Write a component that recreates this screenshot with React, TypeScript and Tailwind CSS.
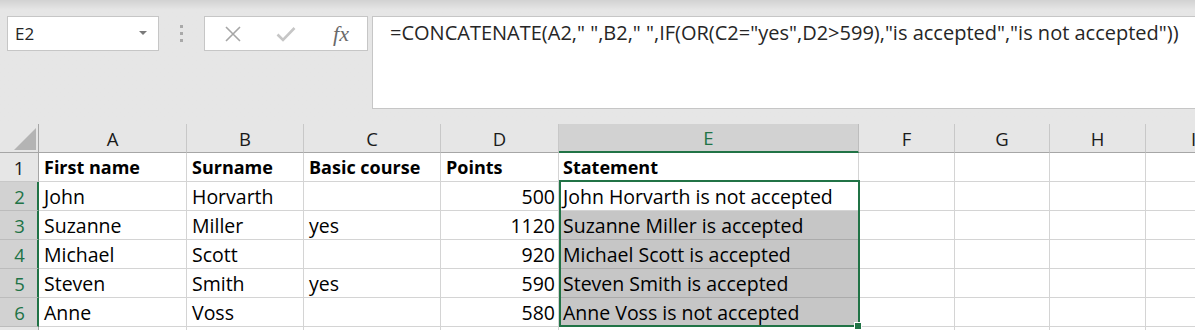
import React from 'react';

// 列定义：字母
const columns = ['A', 'B', 'C', 'D', 'E', 'F', 'G', 'H', 'I'];

type Row = {
  first: string;
  surname: string;
  course: string;
  points: string;
  statement: string;
  bold?: boolean;
};

const rows: Row[] = [
  { first: 'First name', surname: 'Surname', course: 'Basic course', points: 'Points', statement: 'Statement', bold: true },
  { first: 'John', surname: 'Horvarth', course: '', points: '500', statement: 'John Horvarth is not accepted' },
  { first: 'Suzanne', surname: 'Miller', course: 'yes', points: '1120', statement: 'Suzanne Miller is accepted' },
  { first: 'Michael', surname: 'Scott', course: '', points: '920', statement: 'Michael Scott is accepted' },
  { first: 'Steven', surname: 'Smith', course: 'yes', points: '590', statement: 'Steven Smith is accepted' },
  { first: 'Anne', surname: 'Voss', course: '', points: '580', statement: 'Anne Voss is not accepted' },
  { first: '', surname: '', course: '', points: '', statement: '' },
];

const cellFont = { fontFamily: '"Open Sans", "Liberation Sans", sans-serif' };

/**
 * 公式栏
 */
const FormulaBar: React.FC = () => (
  <div className="flex h-[124px] items-start bg-gradient-to-b from-[#d2d2d2] via-[#e6e6e6] via-[8%] to-[#e6e6e6] pt-4 pl-[7px]">
    {/* 名称框 */}
    <div className="flex h-[35px] w-[152px] items-center justify-between border border-[#c6c6c6] bg-white pl-[7px] pr-[11px]">
      <span className="text-[17px] text-[#262626]" style={{ fontFamily: '"Open Sans", sans-serif' }}>
        E2
      </span>
      <svg width="8" height="5" viewBox="0 0 8 5">
        <polygon points="0,0 8,0 4,4" fill="#7a7a7a" />
      </svg>
    </div>

    {/* 分隔点 */}
    <div className="flex h-[35px] w-[45px] flex-col items-center justify-center gap-[4px]">
      <span className="h-[3px] w-[3px] bg-[#a9a9a9]" />
      <span className="h-[3px] w-[3px] bg-[#a9a9a9]" />
      <span className="h-[3px] w-[3px] bg-[#a9a9a9]" />
    </div>

    {/* 取消 / 确认 / fx */}
    <div className="flex h-[35px] w-[164px] items-center border border-[#c6c6c6] bg-white">
      <div className="flex w-[54px] justify-center pl-[2px]">
        <svg width="18" height="18" viewBox="0 0 18 18">
          <path d="M2 2 L16 16 M16 2 L2 16" stroke="#a6a6a6" strokeWidth="1.6" fill="none" />
        </svg>
      </div>
      <div className="flex w-[54px] justify-center">
        <svg width="20" height="16" viewBox="0 0 20 16">
          <path d="M1.5 8.5 L7 14 L18.5 2" stroke="#c6c6c6" strokeWidth="2.6" fill="none" />
        </svg>
      </div>
      <div className="flex w-[54px] justify-center pl-[2px]">
        <span
          className="text-[22px] leading-[24px] italic text-[#6a6a6a]"
          style={{ fontFamily: '"Liberation Serif", serif' }}
        >
          fx
        </span>
      </div>
    </div>

    {/* 公式输入框 */}
    <div className="ml-[4px] h-[93px] flex-1 border-y border-l border-[#c6c6c6] bg-white pl-[17px] pt-[4px]">
      <span
        className="whitespace-pre text-[20px] leading-[24px] text-[#262626]"
        style={{ fontFamily: '"Open Sans", sans-serif' }}
      >
        =CONCATENATE(A2," ",B2," ",IF(OR(C2="yes",D2&gt;599),"is accepted","is not accepted"))
      </span>
    </div>
  </div>
);

/**
 * 工作表网格
 */
const Sheet: React.FC = () => (
  <div className="relative overflow-hidden">
    <div className="grid w-[1242px] grid-cols-[39px_148px_117px_137px_118px_300px_96px_95px_96px_96px]" style={cellFont}>
      {/* 列标题行 */}
      <div className="relative h-[29px] border-r border-b border-[#a6a6a6] bg-[#e6e6e6]">
        <svg className="absolute right-[2px] bottom-[2px]" width="22" height="22" viewBox="0 0 22 22">
          <polygon points="0,22 22,22 22,0" fill="#b4b4b4" />
        </svg>
      </div>
      {columns.map((c) =>
        c === 'E' ? (
          <div
            key={c}
            className="flex h-[29px] items-center justify-center border-r border-b-2 border-r-[#bdbdbd] border-b-[#217346] bg-[#d2d2d2] pt-[1px] text-[18.5px] text-[#217346]"
          >
            {c}
          </div>
        ) : (
          <div
            key={c}
            className="flex h-[29px] items-center justify-center border-r border-b border-r-[#c8c8c8] border-b-[#a6a6a6] bg-[#e6e6e6] pt-[1px] text-[18.5px] text-[#1a1a1a]"
          >
            {c}
          </div>
        ),
      )}

      {/* 数据行 */}
      {rows.map((r, i) => {
        const n = i + 1;
        const selected = n >= 2 && n <= 6;
        const shaded = n >= 3 && n <= 6;
        const weight = r.bold ? 'font-bold text-[18px]' : 'text-[19.5px]';
        const cell = `flex h-[29px] items-center whitespace-nowrap border-r border-b border-[#d4d4d4] bg-white px-[5px] pt-[1px] text-black ${weight}`;
        return (
          <React.Fragment key={n}>
            {selected ? (
              <div className="flex h-[29px] items-center justify-center border-r-2 border-b border-r-[#217346] border-b-[#bcbcbc] bg-[#d2d2d2] pt-[1px] pl-[2px] text-[18.5px] text-[#217346]">
                {n}
              </div>
            ) : (
              <div className="flex h-[29px] items-center justify-center border-r border-b border-r-[#a6a6a6] border-b-[#c8c8c8] bg-[#e6e6e6] pt-[1px] text-[18.5px] text-[#1a1a1a]">
                {n < 7 ? n : ''}
              </div>
            )}
            <div className={cell}>{r.first}</div>
            <div className={cell}>{r.surname}</div>
            <div className={cell}>{r.course}</div>
            <div className={`${cell} ${r.bold ? '' : 'justify-end pr-[3px]'}`}>{r.points}</div>
            <div
              className={`flex h-[29px] items-center whitespace-nowrap border-r border-b px-[4px] pt-[1px] text-black ${weight} ${
                shaded ? 'border-[#ababab] bg-[#c6c6c6]' : 'border-[#d4d4d4] bg-white'
              }`}
            >
              {r.statement}
            </div>
            <div className={cell} />
            <div className={cell} />
            <div className={cell} />
            <div className={cell} />
          </React.Fragment>
        );
      })}
    </div>

    {/* 选区边框 E2:E6 */}
    <div className="pointer-events-none absolute top-[56px] left-[559px] h-[147px] w-[301px] border-2 border-[#217346]" />
    {/* 填充柄 */}
    <div className="pointer-events-none absolute top-[198px] left-[854px] h-[8px] w-[8px] border border-white bg-[#217346]" />
  </div>
);

export const App: React.FC = () => {
  return (
    <div className="h-[330px] w-[1195px] overflow-hidden bg-white">
      <FormulaBar />
      <Sheet />
    </div>
  );
};

export default App;
